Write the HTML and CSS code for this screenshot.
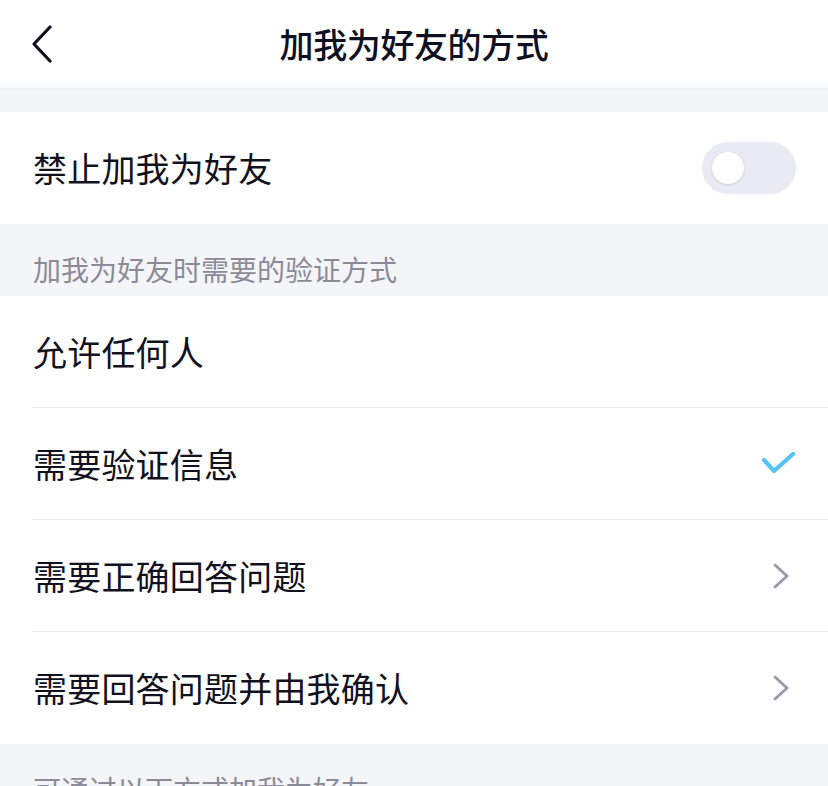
FILE: index.html
```html
<!DOCTYPE html>
<html lang="zh-CN">
<head>
<meta charset="utf-8">
<title>加我为好友的方式</title>
<link rel="stylesheet" href="styles.css">
</head>
<body>
<div class="page">
  <header class="nav">
    <svg class="back" width="24" height="38" viewBox="0 0 24 38"><polyline points="19,2 3,19 19,36" fill="none" stroke="#0f1021" stroke-width="3.2" stroke-linecap="round" stroke-linejoin="round"/></svg>
    <h1 class="title">加我为好友的方式</h1>
  </header>
  <div class="nav-fade"></div>
  <div class="gap"></div>
  <div class="group">
    <div class="row">
      <span class="label">禁止加我为好友</span>
      <div class="switch"><div class="knob"></div></div>
    </div>
  </div>
  <div class="section">加我为好友时需要的验证方式</div>
  <div class="group">
    <div class="row sep"><span class="label">允许任何人</span></div>
    <div class="row sep">
      <span class="label">需要验证信息</span>
      <svg class="check" width="36" height="26" viewBox="0 0 36 26"><polyline points="3,9 13,20 32,3" fill="none" stroke="#55c3f3" stroke-width="4.2" stroke-linecap="round" stroke-linejoin="round"/></svg>
    </div>
    <div class="row sep">
      <span class="label">需要正确回答问题</span>
      <svg class="chev" width="18" height="28" viewBox="0 0 18 28"><polyline points="3,3 15,14 3,25" fill="none" stroke="#9b9bae" stroke-width="3" stroke-linecap="round" stroke-linejoin="round"/></svg>
    </div>
    <div class="row">
      <span class="label">需要回答问题并由我确认</span>
      <svg class="chev" width="18" height="28" viewBox="0 0 18 28"><polyline points="3,3 15,14 3,25" fill="none" stroke="#9b9bae" stroke-width="3" stroke-linecap="round" stroke-linejoin="round"/></svg>
    </div>
  </div>
  <div class="section">可通过以下方式加我为好友</div>
</div>
</body>
</html>
```
FILE: styles.css
```css
html, body {
  margin: 0;
  padding: 0;
  background: #f4f5f9;
}
.page {
  width: 828px;
  font-family: "Noto Sans CJK SC", "Noto Sans", sans-serif;
  color: #111120;
}
.nav {
  height: 80px;
  background: #ffffff;
  display: flex;
  align-items: center;
  justify-content: center;
  position: relative;
}
.back {
  position: absolute;
  left: 31px;
  top: 25px;
}
.title {
  margin: 0;
  font-size: 34px;
  font-weight: 500;
  line-height: 40px;
  letter-spacing: -0.4px;
  padding-top: 8px;
  color: #0f1021;
}
.nav-fade {
  height: 8px;
  background: linear-gradient(#fdfdfe, #f9fafc);
  border-bottom: 1px solid #eef0f4;
}
.gap {
  height: 23px;
}
.group {
  background: #ffffff;
}
.row {
  height: 112px;
  margin-left: 32px;
  padding-right: 32px;
  display: flex;
  align-items: center;
  justify-content: space-between;
  box-sizing: border-box;
}
.row.sep {
  border-bottom: 1px solid #e9e9ef;
}
.label {
  font-size: 34px;
  line-height: 40px;
  padding-left: 1px;
  letter-spacing: 0.2px;
}
.switch {
  width: 94px;
  height: 52px;
  border-radius: 26px;
  background: #e9eaf2;
  display: flex;
  align-items: center;
  padding-left: 10px;
  box-sizing: border-box;
}
.knob {
  width: 32px;
  height: 32px;
  border-radius: 50%;
  background: #ffffff;
  box-shadow: 0 1px 3px rgba(0, 0, 0, 0.12);
}
.check {
  margin-right: -1px;
}
.chev {
  margin-right: 6px;
}
.section {
  height: 72px;
  box-sizing: border-box;
  padding: 31px 0 0 33px;
  font-size: 28px;
  line-height: 28px;
  color: #8b8b98;
}
```
